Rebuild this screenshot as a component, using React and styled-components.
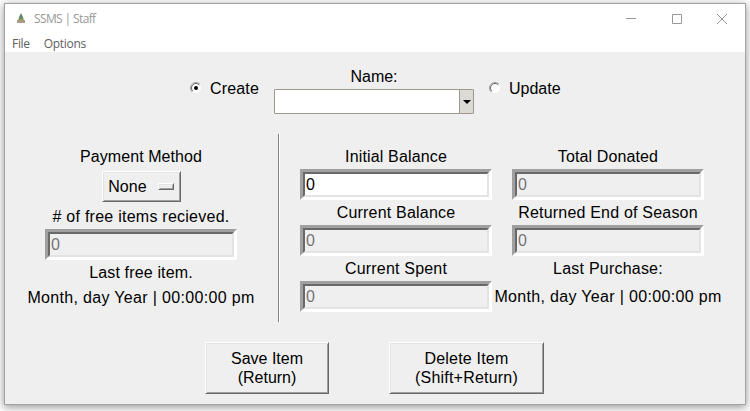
import React from "react";
import styled, { createGlobalStyle } from "styled-components";

const Global = createGlobalStyle`
  * { box-sizing: border-box; }
  body {
    margin: 0;
    background: #fff;
    overflow: hidden;
    font-family: "Liberation Sans", Arial, sans-serif;
    font-size: 16px;
    color: #000;
  }
`;

const Desktop = styled.div`
  width: 750px;
  height: 411px;
  padding: 3px 4px 6px;
  background: #fcfcfc;
`;

const Window = styled.main`
  width: 742px;
  height: 402px;
  border: 1px solid #a3a3a3;
  background: #efefef;
  box-shadow: 0 2px 8px rgba(0, 0, 0, 0.42);
`;

const TitleBar = styled.header`
  display: flex;
  align-items: center;
  height: 30px;
  padding-left: 10px;
  background: #fff;
`;

const Title = styled.h1`
  flex: 1;
  margin: 0 0 0 7px;
  font: 400 12px/16px "Open Sans", "Noto Sans", sans-serif;
  letter-spacing: -0.62px;
  color: #979797;
`;

const WindowButton = styled.button`
  display: grid;
  place-items: center;
  width: ${(p) => p.$width || 45}px;
  height: 30px;
  padding: 0;
  border: 0;
  background: none;
`;

const MenuBar = styled.nav`
  display: flex;
  gap: 14px;
  height: 18px;
  padding-left: 7px;
  background: #fff;
`;

const MenuItem = styled.span`
  font: 400 12px/20px "Open Sans", "Noto Sans", sans-serif;
  letter-spacing: -0.3px;
  color: #606060;
`;

const NameRow = styled.section`
  display: flex;
  height: 82px;
  padding: 12px 0 0 185px;
`;

const Radio = styled.label`
  display: flex;
  align-items: center;
  height: 24px;
  width: ${(p) => p.$width}px;
  gap: 8px;
  margin-top: 12px;
  letter-spacing: ${(p) => p.$spacing || 0}px;
`;

const RadioText = styled.span`
  padding-top: 2px;
`;

const NameField = styled.div`
  width: 200px;
  margin-right: 15px;
`;

const Label = styled.div`
  height: ${(p) => p.$height || 25}px;
  line-height: ${(p) => p.$height || 25}px;
  text-align: center;
  white-space: nowrap;
  letter-spacing: ${(p) => p.$spacing || 0}px;
`;

const Combo = styled.div`
  display: flex;
  height: 25px;
  border: 1px solid #9d9a8c;
  border-radius: 1px;
  background: #fff;
`;

const ComboArrow = styled.div`
  display: grid;
  place-items: center;
  width: 14px;
  margin-left: auto;
  border-left: 1px solid #9d9a8c;
  background: #dcdad5;
`;

const Details = styled.section`
  display: flex;
  height: 188px;
`;

const PaymentColumn = styled.div`
  width: 273px;
  padding: 10px 1px 0 0;
`;

const Divider = styled.div`
  width: 2px;
  border-left: 1px solid #828282;
  border-right: 1px solid #fff;
`;

const BalanceGrid = styled.div`
  display: grid;
  grid-template-columns: 192px 228px;
  column-gap: 2px;
  align-content: start;
  padding: 10px 0 0 20px;
`;

const Field = styled.div`
  display: flex;
  flex-direction: column;
  align-items: center;
  height: 56px;
`;

const EntryFrame = styled.div`
  width: 192px;
  height: 31px;
  border: 3px solid;
  border-color: #a0a0a0 #fff #fff #a0a0a0;
`;

const EntryText = styled.div`
  height: 25px;
  padding-left: 1px;
  border: 2px solid;
  border-color: #696969 #e3e3e3 #e3e3e3 #696969;
  background: ${(p) => (p.$active ? "#fff" : "#efefef")};
  color: ${(p) => (p.$active ? "#000" : "#757575")};
  line-height: 21px;
`;

const RaisedButton = styled.button`
  display: flex;
  align-items: center;
  justify-content: center;
  gap: 11px;
  width: ${(p) => p.$width}px;
  height: ${(p) => p.$height}px;
  padding: 0;
  border: 1px solid;
  border-color: #fff #696969 #696969 #fff;
  box-shadow: inset 1px 1px #e3e3e3, inset -1px -1px #a0a0a0;
  background: #efefef;
  font: 16px/19px "Liberation Sans", Arial, sans-serif;
  letter-spacing: ${(p) => p.$spacing || 0}px;
  color: #000;
  white-space: pre-line;
`;

const MethodSlot = styled.div`
  display: flex;
  justify-content: center;
  height: 35px;
  padding-top: 2px;
`;

const MenuIndicator = styled.span`
  width: 16px;
  height: 7px;
  margin-top: -1px;
  border: 1px solid;
  border-color: #fff #696969 #696969 #fff;
  box-shadow: inset 1px 1px #e3e3e3, inset -1px -1px #a0a0a0;
`;

const Actions = styled.footer`
  display: flex;
  gap: 60px;
  padding: 20px 0 0 200px;
`;

function TreeIcon() {
  return (
    <svg width="12" height="12" viewBox="0 0 12 12">
      <path d="M6 0 L8 4 L9 8 H3 L4 4 Z" fill="#788f65" />
      <path d="M5 2 h2 v3 h-2 z" fill="#4f8a70" />
      <path d="M2 7 h8 v3 h-8 z" fill="#a69c8a" />
      <path d="M5 6 h2 v2 h-2 z" fill="#b39a4c" />
    </svg>
  );
}

function RadioMark({ checked }) {
  return (
    <svg width="12" height="12" viewBox="0 0 12 12">
      <circle cx="6" cy="6" r="5" fill="#fff" />
      <path d="M2.1 9.9 A5.5 5.5 0 0 1 9.9 2.1" fill="none" stroke="#a0a0a0" />
      <path d="M2.8 9.2 A4.5 4.5 0 0 1 9.2 2.8" fill="none" stroke="#696969" />
      {checked && <circle cx="6" cy="6" r="2" fill="#000" />}
    </svg>
  );
}

function Entry({ active }) {
  return (
    <EntryFrame>
      <EntryText $active={active}>0</EntryText>
    </EntryFrame>
  );
}

function LabeledEntry({ label, active, spacing }) {
  return (
    <Field>
      <Label $spacing={spacing}>{label}</Label>
      <Entry active={active} />
    </Field>
  );
}

export default function App() {
  return (
    <Desktop>
      <Global />
      <Window>
        <TitleBar>
          <TreeIcon />
          <Title>SSMS | Staff</Title>
          <WindowButton $width={46} aria-label="Minimize">
            <svg width="10" height="10"><path d="M0 4.5H10" stroke="#999" /></svg>
          </WindowButton>
          <WindowButton aria-label="Maximize">
            <svg width="10" height="10"><path d="M.5 .5h9v9h-9z" fill="none" stroke="#999" /></svg>
          </WindowButton>
          <WindowButton $width={46} aria-label="Close">
            <svg width="10" height="10"><path d="M0 0L10 10M10 0L0 10" stroke="#999" /></svg>
          </WindowButton>
        </TitleBar>
        <MenuBar>
          <MenuItem>File</MenuItem>
          <MenuItem>Options</MenuItem>
        </MenuBar>
        <NameRow>
          <Radio $width={84} $spacing={0.16}><RadioMark checked /><RadioText>Create</RadioText></Radio>
          <NameField>
            <Label>Name:</Label>
            <Combo>
              <ComboArrow>
                <svg width="8" height="4"><path d="M0 0H8L4 4Z" /></svg>
              </ComboArrow>
            </Combo>
          </NameField>
          <Radio $width={90}><RadioMark /><RadioText>Update</RadioText></Radio>
        </NameRow>
        <Details>
          <PaymentColumn>
            <Label $spacing={0.08}>Payment Method</Label>
            <MethodSlot>
              <RaisedButton $width={79} $height={31} $spacing={0.1}>None<MenuIndicator /></RaisedButton>
            </MethodSlot>
            <Field>
              <Label $spacing={0.25}># of free items recieved.</Label>
              <Entry />
            </Field>
            <Label $spacing={0.15}>Last free item.</Label>
            <Label $spacing={0.33}>Month, day Year | 00:00:00 pm</Label>
          </PaymentColumn>
          <Divider />
          <BalanceGrid>
            <LabeledEntry label="Initial Balance" spacing={0.15} active />
            <LabeledEntry label="Total Donated" spacing={0.12} />
            <LabeledEntry label="Current Balance" spacing={0.2} />
            <LabeledEntry label="Returned End of Season" spacing={0.2} />
            <LabeledEntry label="Current Spent" spacing={0.2} />
            <Field>
              <Label $spacing={0.22}>Last Purchase:</Label>
              <Label $height={31} $spacing={0.33}>Month, day Year | 00:00:00 pm</Label>
            </Field>
          </BalanceGrid>
        </Details>
        <Actions>
          <RaisedButton $width={124} $height={52}>{"Save Item\n(Return)"}</RaisedButton>
          <RaisedButton $width={155} $height={52} $spacing={0.2}>{"Delete Item\n(Shift+Return)"}</RaisedButton>
        </Actions>
      </Window>
    </Desktop>
  );
}
